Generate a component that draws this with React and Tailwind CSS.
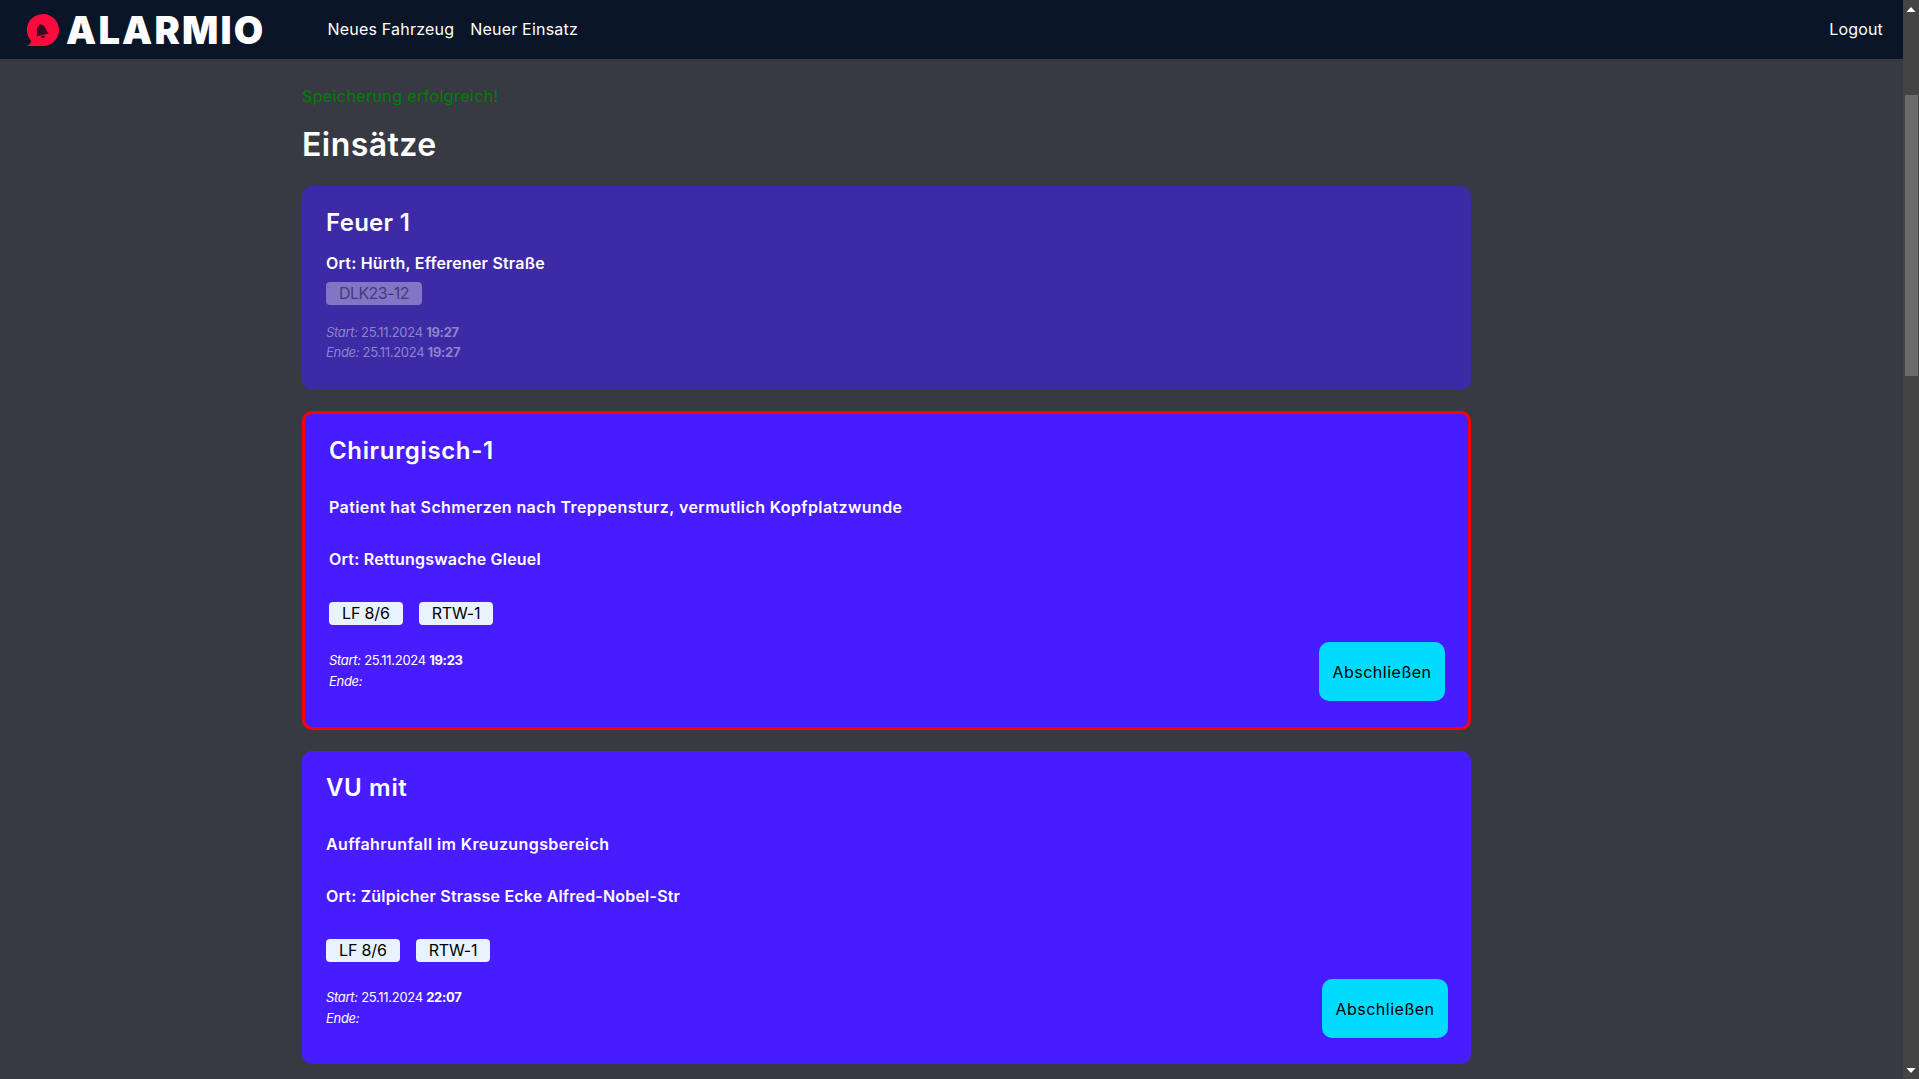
const fontStack = { fontFamily: "Inter, 'Noto Sans', sans-serif" };

const Logo = () => (
  <div className="flex items-center">
    <svg width="34" height="34" viewBox="0 0 34 34" className="ml-[26px]">
      <path d="M17 1a16 16 0 0 1 0 32H1c2-1 3.6-2.6 4.2-5A16 16 0 0 1 17 1z" fill="#ff0a3c" />
      {/* bell */}
      <g fill="#3a0b20" transform="translate(15.5 17.5) rotate(-14) scale(0.82) translate(-17 -14.5)">
        <path d="M17 6.500c1 0 1.700.7 1.700 1.600 2.600.8 3.700 3 3.900 5.700.2 2.800.9 4.600 2.400 6.400H9c1.500-1.800 2.200-3.600 2.400-6.400.2-2.700 1.300-4.900 3.900-5.700 0-.9.700-1.600 1.700-1.600z" />
        <path d="M14.500 21.500h5a2.500 2.500 0 0 1-5 0z" />
      </g>
    </svg>
    <span className="ml-[6px] text-[38px] leading-none font-black text-white tracking-[2.2px]">ALARMIO</span>
  </div>
);

const Navbar = () => (
  <header className="h-[59px] shrink-0 bg-[#0b1528] flex items-center text-white">
    <Logo />
    <nav className="ml-[62px] -mt-[2px] flex items-center gap-4 text-base tracking-[0.2px]">
      <a>Neues Fahrzeug</a>
      <a>Neuer Einsatz</a>
    </nav>
    <a className="ml-auto mr-[20px] -mt-[2px] text-base tracking-[0.15px]">Logout</a>
  </header>
);

const Tag = ({ label, muted }) => (
  <span className={`h-[23px] rounded-[4px] px-[13px] text-base leading-[23px] ${muted ? "bg-[#8275c5] text-[#473a78] tracking-[-0.6px]" : "bg-[#e9f3ff] text-black tracking-[-0.15px]"}`}>
    {label}
  </span>
);

const Times = ({ start, time }) => (
  <div className="text-[13px] leading-[20px] tracking-[-0.3px]">
    <p>
      <em>Start:</em> {start} <b>{time}</b>
    </p>
    <p className="mt-px">
      <em>Ende:</em>
    </p>
  </div>
);

const ActiveCard = ({ title, desc, ort, time, highlight }) => (
  <section className={`rounded-[10px] bg-[#471dff] text-white p-6 ${highlight ? "border-[3px] border-[#ff0000]" : ""}`}>
    <h2 className="text-2xl leading-[26px] font-semibold tracking-[0.65px]">{title}</h2>
    <p className="mt-[31px] text-base leading-6 font-semibold tracking-[0.4px]">{desc}</p>
    <p className="mt-[28px] text-base leading-6 font-semibold tracking-[0.2px]">{ort}</p>
    <div className="mt-[31px] flex gap-4">
      <Tag label="LF 8/6" />
      <Tag label="RTW-1" />
    </div>
    <div className="flex justify-between items-end">
      <div className="mt-[25px] pb-[12px]">
        <Times start="25.11.2024" time={time} />
      </div>
      <button className="h-[59px] w-[126px] mb-[2px] -mr-px rounded-[10px] bg-[#00dcff] text-black text-base tracking-[0.5px]">
        Abschließen
      </button>
    </div>
  </section>
);

const ClosedCard = () => (
  <section className="rounded-[10px] bg-[#3d2aa5] px-6 pt-6 h-[204px] text-white">
    <h2 className="text-2xl leading-[26px] font-semibold tracking-[0.3px]">Feuer 1</h2>
    <p className="mt-[15px] text-base leading-6 font-semibold tracking-[0.2px]">Ort: Hürth, Efferener Straße</p>
    <div className="mt-[7px] flex">
      <Tag label="DLK23-12" muted />
    </div>
    <div className="mt-[17px] text-[#8f83cb] text-[13px] leading-[20px] tracking-[-0.3px]">
      <p>
        <em>Start:</em> 25.11.2024 <b>19:27</b>
      </p>
      <p>
        <em>Ende:</em> 25.11.2024 <b>19:27</b>
      </p>
    </div>
  </section>
);

const Scrollbar = () => (
  <div className="w-4 shrink-0 bg-[#444444] flex flex-col items-center">
    <svg width="10" height="5" viewBox="0 0 10 5" className="mt-[7px]">
      <path d="M5 0l4.500 5H.5z" fill="#fff" />
    </svg>
    <div className="mt-[83px] h-[281px] w-[13px] bg-[#6b6b6b]" />
    <svg width="10" height="5" viewBox="0 0 10 5" className="mt-auto mb-[6px]">
      <path d="M.5 0h9L5 5z" fill="#fff" />
    </svg>
  </div>
);

export default function App() {
  return (
    <div className="h-screen overflow-hidden flex bg-[#373a42]" style={fontStack}>
      <div className="flex-1 min-w-0 flex flex-col">
        <Navbar />
        <main className="ml-[302px] w-[1169px]">
          <p className="mt-[25px] text-base leading-6 font-normal text-[#008000] tracking-[0.4px]">
            Speicherung erfolgreich!
          </p>
          <h1 className="mt-[16px] text-[32px] leading-[42px] font-semibold text-white tracking-[0.45px]">Einsätze</h1>
          <div className="mt-[20px] flex flex-col gap-[21px]">
            <ClosedCard />
            <ActiveCard
              highlight
              title="Chirurgisch-1"
              desc="Patient hat Schmerzen nach Treppensturz, vermutlich Kopfplatzwunde"
              ort="Ort: Rettungswache Gleuel"
              time="19:23"
            />
            <ActiveCard
              title="VU mit"
              desc="Auffahrunfall im Kreuzungsbereich"
              ort="Ort: Zülpicher Strasse Ecke Alfred-Nobel-Str"
              time="22:07"
            />
          </div>
        </main>
      </div>
      <Scrollbar />
    </div>
  );
}
